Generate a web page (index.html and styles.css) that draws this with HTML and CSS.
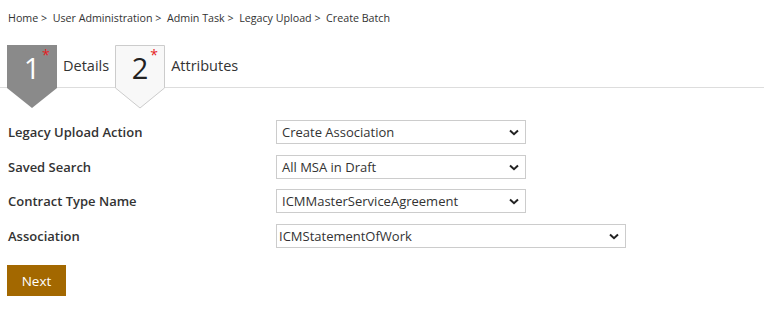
FILE: index.html
```html
<!DOCTYPE html>
<html>
<head>
<meta charset="utf-8">
<link rel="stylesheet" href="styles.css">
</head>
<body>
<div class="crumbs">Home &gt;&nbsp; User Administration &gt;&nbsp; Admin Task &gt;&nbsp; Legacy Upload &gt;&nbsp; Create Batch</div>
<div class="steps">
  <div class="step step-active">
    <svg class="step-bg" width="51" height="64" viewBox="0 0 51 64"><polygon points="0,0 50,0 50,43 25,63 0,43" fill="#8a8a8a"/></svg>
    <span class="step-num">1</span><span class="step-star">*</span>
  </div>
  <span class="step-label">Details</span>
  <div class="step step-next">
    <svg class="step-bg" width="51" height="64" viewBox="0 0 51 64"><polygon points="0.5,0.5 49.5,0.5 49.5,43 25,63 0.5,43" fill="#f8f8f8" stroke="#cccccc"/></svg>
    <span class="step-num">2</span><span class="step-star">*</span>
  </div>
  <span class="step-label">Attributes</span>
</div>
<div class="form">
  <div class="row">
    <label class="label">Legacy Upload Action</label>
    <div class="select">Create Association<svg class="chev" width="10" height="7" viewBox="0 0 10 7"><path d="M1 1.5 L5 5.2 L9 1.5" fill="none" stroke="#222" stroke-width="2"/></svg></div>
  </div>
  <div class="row">
    <label class="label">Saved Search</label>
    <div class="select">All MSA in Draft<svg class="chev" width="10" height="7" viewBox="0 0 10 7"><path d="M1 1.5 L5 5.2 L9 1.5" fill="none" stroke="#222" stroke-width="2"/></svg></div>
  </div>
  <div class="row">
    <label class="label">Contract Type Name</label>
    <div class="select">ICMMasterServiceAgreement<svg class="chev" width="10" height="7" viewBox="0 0 10 7"><path d="M1 1.5 L5 5.2 L9 1.5" fill="none" stroke="#222" stroke-width="2"/></svg></div>
  </div>
  <div class="row">
    <label class="label">Association</label>
    <div class="select select-wide">ICMStatementOfWork<svg class="chev" width="10" height="7" viewBox="0 0 10 7"><path d="M1 1.5 L5 5.2 L9 1.5" fill="none" stroke="#222" stroke-width="2"/></svg></div>
  </div>
</div>
<button class="btn">Next</button>
</body>
</html>
```
FILE: styles.css
```css
* { box-sizing: border-box; }
body {
  margin: 0;
  font-family: "Open Sans", "Noto Sans", sans-serif;
  color: #333;
  background: #fff;
}
.crumbs {
  font-size: 10.7px;
  padding: 11px 0 0 8px;
  height: 45px;
}
.steps {
  display: flex;
  align-items: center;
  height: 43px;
  border-bottom: 1px solid #ddd;
  padding-left: 7px;
}
.step {
  position: relative;
  width: 50px;
  height: 43px;
  align-self: flex-start;
}
.step-bg {
  position: absolute;
  left: 0;
  top: 0;
}
.step-num {
  position: absolute;
  left: 0;
  width: 50px;
  top: 3px;
  text-align: center;
  font-size: 29px;
  font-weight: 400;
  line-height: 40px;
}
.step-active .step-num { color: #fff; }
.step-next .step-num { color: #222; }
.step-star {
  position: absolute;
  left: 35px;
  top: 3px;
  color: #e51c23;
  font-size: 14px;
  line-height: 14px;
}
.step-label {
  font-size: 14.5px;
  margin: 0 6px 0 6px;
  padding-bottom: 2px;
}
.form {
  padding: 32px 0 0 8px;
  display: flex;
  flex-direction: column;
  gap: 10.7px;
}
.row {
  display: flex;
  align-items: center;
  height: 24px;
}
.label {
  width: 268px;
  font-size: 13px;
  font-weight: 600;
  color: #333;
}
.select {
  position: relative;
  width: 250px;
  height: 24px;
  border: 1px solid #ccc;
  font-size: 13px;
  line-height: 22px;
  padding-left: 5px;
  color: #333;
}
.select-wide { width: 350px; padding-left: 2px; }
.chev {
  position: absolute;
  right: 6px;
  top: 8px;
}
.btn {
  margin: 17px 0 0 7px;
  width: 59px;
  height: 31px;
  border: 0;
  background: #a36800;
  color: #fff;
  font-family: "Open Sans", sans-serif;
  font-size: 13.5px;
  padding: 0;
}
```
